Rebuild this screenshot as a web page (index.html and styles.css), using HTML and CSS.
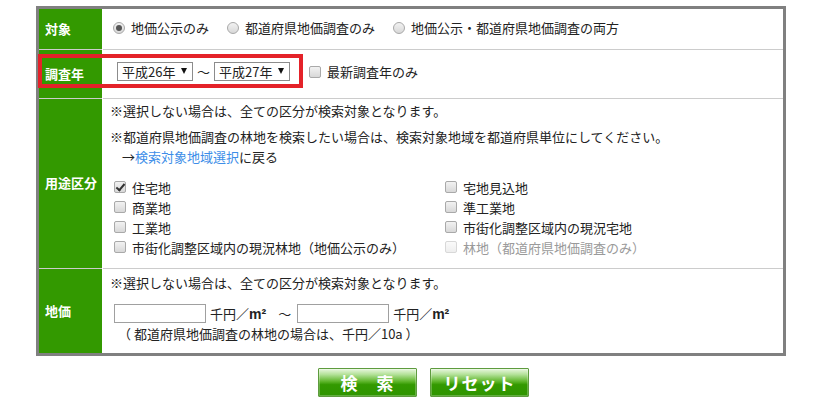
FILE: index.html
```html
<!DOCTYPE html>
<html lang="ja">
<head>
<meta charset="utf-8">
<link rel="stylesheet" href="styles.css">
</head>
<body>
<div class="wrap">
  <table class="form">
    <tr class="r1">
      <th>対象</th>
      <td>
        <div class="line">
          <label class="opt"><input type="radio" name="t" class="rd" checked>地価公示のみ</label>
          <label class="opt"><input type="radio" name="t" class="rd">都道府県地価調査のみ</label>
          <label class="opt"><input type="radio" name="t" class="rd">地価公示・都道府県地価調査の両方</label>
        </div>
      </td>
    </tr>
    <tr class="r2">
      <th>調査年</th>
      <td>
        <div class="line">
          <span class="sel">平成26年<span class="arr"></span></span>
          <span class="tilde">～</span>
          <span class="sel">平成27年<span class="arr"></span></span>
          <label class="opt latest"><input type="checkbox" class="cb">最新調査年のみ</label>
        </div>
      </td>
    </tr>
    <tr class="r3">
      <th>用途区分</th>
      <td>
        <p class="note n1">※選択しない場合は、全ての区分が検索対象となります。</p>
        <p class="note n2">※都道府県地価調査の林地を検索したい場合は、検索対象地域を都道府県単位にしてください。</p>
        <p class="note n3">→<a href="#" class="link">検索対象地域選択</a>に戻る</p>
        <div class="grid">
          <label class="opt"><input type="checkbox" class="cb" checked>住宅地</label>
          <label class="opt"><input type="checkbox" class="cb">宅地見込地</label>
          <label class="opt"><input type="checkbox" class="cb">商業地</label>
          <label class="opt"><input type="checkbox" class="cb">準工業地</label>
          <label class="opt"><input type="checkbox" class="cb">工業地</label>
          <label class="opt"><input type="checkbox" class="cb">市街化調整区域内の現況宅地</label>
          <label class="opt"><input type="checkbox" class="cb">市街化調整区域内の現況林地（地価公示のみ）</label>
          <label class="opt disabled"><input type="checkbox" class="cb" disabled>林地（都道府県地価調査のみ）</label>
        </div>
      </td>
    </tr>
    <tr class="r4">
      <th>地価</th>
      <td>
        <p class="note n1">※選択しない場合は、全ての区分が検索対象となります。</p>
        <div class="price">
          <input type="text" class="txt">
          <span class="unit">千円／<b>m²</b></span>
          <span class="tilde2">～</span>
          <input type="text" class="txt">
          <span class="unit">千円／<b>m²</b></span>
        </div>
        <p class="note n4">（ 都道府県地価調査の林地の場合は、千円／10a ）</p>
      </td>
    </tr>
  </table>
  <div class="redbox"></div>
  <div class="buttons">
    <button class="btn search">検　索</button>
    <button class="btn reset">リセット</button>
  </div>
</div>
</body>
</html>
```

FILE: styles.css
```css
* { box-sizing: border-box; }
html, body { margin: 0; padding: 0; background: #fff; }
body {
  font-family: "Noto Sans CJK JP", "Noto Sans", sans-serif;
  font-size: 13px;
  color: #222;
}
.wrap {
  position: relative;
  width: 750px;
  margin: 6px 0 0 36px;
}
.form {
  width: 750px;
  border-collapse: collapse;
  border: 3px solid #808080;
}
.form th {
  width: 65px;
  background: #339900;
  color: #fff;
  font-weight: bold;
  text-align: left;
  padding: 0 0 2px 6px;
  vertical-align: middle;
  border-right: 1px solid #fff;
}
.form td {
  padding: 0 0 0 7px;
  vertical-align: top;
}
.form tr + tr th, .form tr + tr td { border-top: 1px solid #cccccc; }
.r1 { height: 42px; }
.r2 { height: 49px; }
.r3 { height: 170px; }
.r4 { height: 86px; }
.r1 td, .r2 td { vertical-align: middle; }
.line { display: flex; align-items: center; }
.opt { display: inline-flex; align-items: center; white-space: nowrap; line-height: 19px; }
.r1 .opt { margin-right: 18px; }
.r1 .line { padding-left: 3px; padding-bottom: 3px; }

.rd, .cb {
  -webkit-appearance: none;
  appearance: none;
  width: 12px;
  height: 12px;
  margin: 0 6px 0 0;
  border: 1px solid #a9a9a9;
  background: linear-gradient(#f2f2f2, #d8d8d8);
  position: relative;
  flex: none;
}
.rd { border-radius: 50%; }
.cb { border-radius: 2px; }
.rd:checked::after {
  content: "";
  position: absolute;
  left: 2px; top: 2px;
  width: 6px; height: 6px;
  border-radius: 50%;
  background: #555;
}
.cb:checked::after {
  content: "";
  position: absolute;
  left: 3px; top: 0px;
  width: 3px; height: 7px;
  border: solid #333;
  border-width: 0 2px 2px 0;
  transform: rotate(40deg);
}
.cb:disabled { border-color: #d8d8d8; background: linear-gradient(#fafafa, #eeeeee); }
.disabled { color: #9a9a9a; }

.r2 .line { padding-left: 7px; padding-bottom: 5px; }
.sel {
  display: inline-flex;
  align-items: center;
  width: 76px;
  height: 19px;
  border: 1px solid #8c8c8c;
  padding-left: 4px;
  background: #fff;
  line-height: 17px;
  position: relative;
}
.arr {
  position: absolute;
  right: 5px;
  top: 5px;
  width: 0; height: 0;
  border-left: 3.5px solid transparent;
  border-right: 3.5px solid transparent;
  border-top: 6px solid #111;
}
.tilde { margin: 0 4px; }
.latest { margin-left: 19px; }

.note { margin: 0; line-height: 18px; }
.r3 .n1 { margin-top: 3px; }
.r3 .n2 { margin-top: 8px; }
.r3 .n3 { margin-top: 2px; padding-left: 12px; }
.link { color: #3d8ee8; text-decoration: none; }
.grid {
  margin-top: 11px;
  padding-left: 4px;
  display: grid;
  grid-template-columns: 331px auto;
  grid-auto-rows: 20px;
}
.grid .opt { margin-right: 8px; }

.r4 .n1 { margin-top: 5px; }
.price { display: flex; align-items: center; margin-top: 12px; padding-left: 4px; }
.txt {
  width: 92px;
  height: 19px;
  border: 1px solid #a0a0a0;
  margin: 0;
  padding: 0;
}
.unit { margin-left: 4px; }
.unit b { font-family: "Liberation Sans", Arial, sans-serif; font-weight: bold; font-size: 14px; }
.tilde2 { margin: 0 6px 0 12px; }
.r4 .n4 { margin-top: 2px; padding-left: 8px; }

.redbox {
  position: absolute;
  left: 2px;
  top: 48px;
  width: 265px;
  height: 34px;
  border: 4px solid #e42229;
  pointer-events: none;
}

.buttons {
  display: flex;
  gap: 13px;
  padding: 12px 0 0 282px;
}
.btn {
  width: 99px;
  height: 29px;
  border: 1px solid #5e9b3e;
  border-radius: 1px;
  background: linear-gradient(#e8f6de 0%, #b4e29a 20%, #5cb428 47%, #339900 58%, #2f9500 100%);
  color: #fff;
  font-family: "Noto Sans CJK JP", sans-serif;
  font-weight: bold;
  font-size: 17px;
  line-height: 27px;
  padding: 0;
  letter-spacing: 1px;
  box-shadow: inset 0 0 0 1px rgba(255,255,255,0.25);
}
```
